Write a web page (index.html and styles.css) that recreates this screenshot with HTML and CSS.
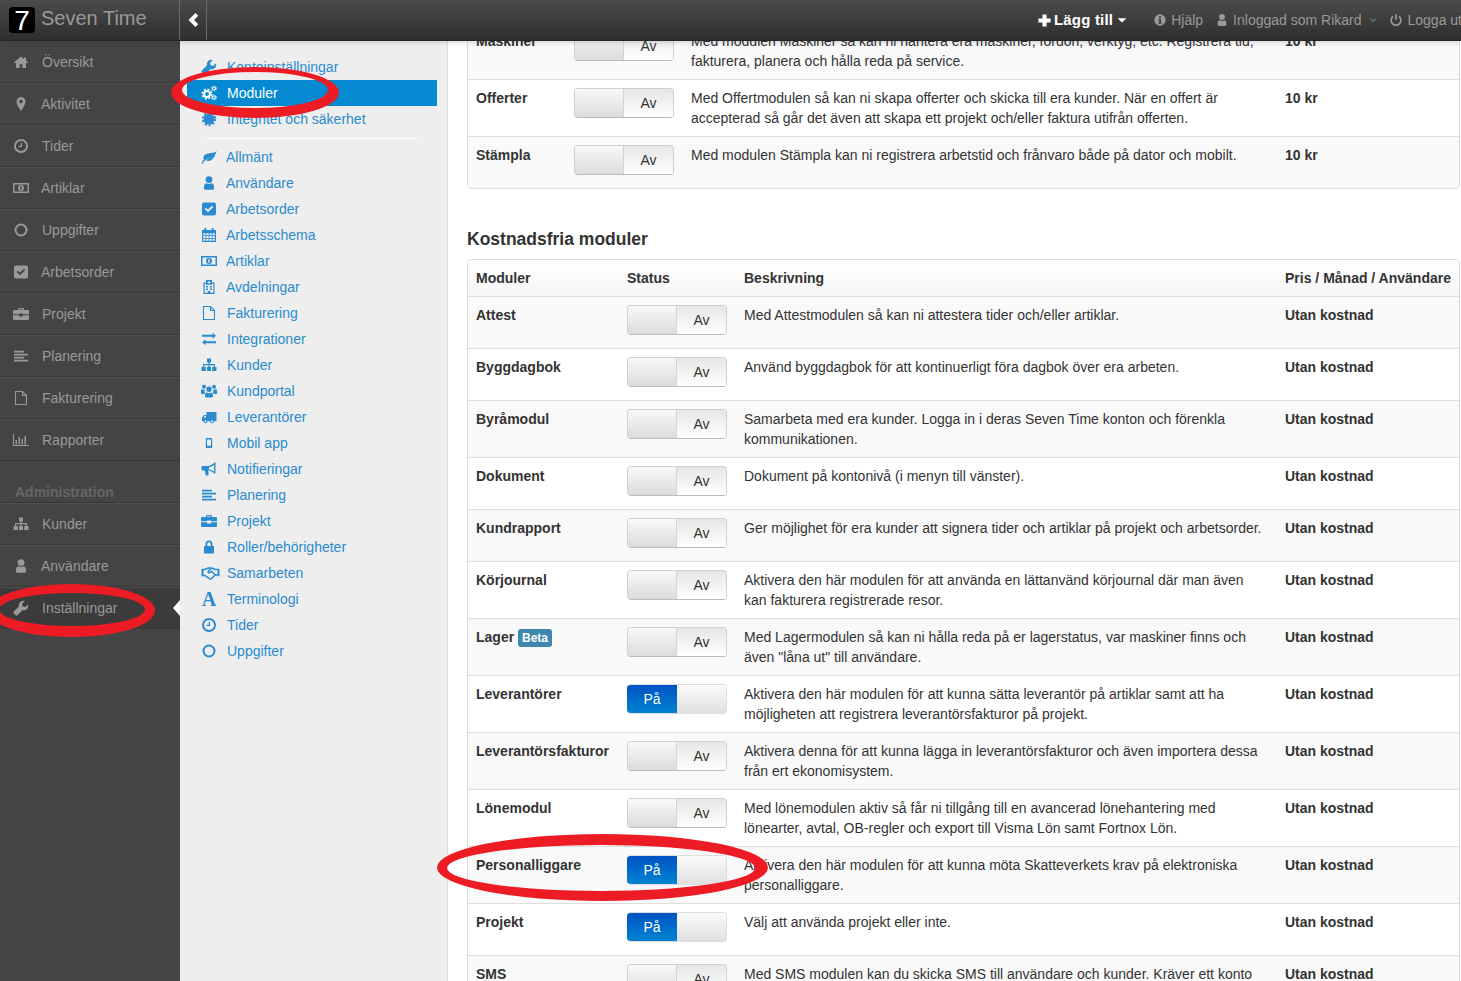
FILE: index.html
```html
<!DOCTYPE html>
<html lang="sv">
<head>
<meta charset="utf-8">
<title>Seven Time</title>
<link rel="stylesheet" href="styles.css">
</head>
<body>
<svg class="defs" width="0" height="0" aria-hidden="true">
<symbol id="i-home" viewBox="0 0 16 16"><path d="M8 2.500 1 8.300l.8 1L3 8.400V14h3.600v-3.700h2.800V14H13V8.400l1.200.9.8-1-2-1.700V3.500h-2v1.400z"/></symbol>
<symbol id="i-marker" viewBox="0 0 16 16"><path fill-rule="evenodd" d="M8 1a4.500 4.500 0 0 0-4.500 4.500C3.500 9 8 15 8 15s4.500-6 4.500-9.500A4.500 4.500 0 0 0 8 1zm0 2.700a1.800 1.800 0 1 1 0 3.600 1.800 1.800 0 0 1 0-3.600z"/></symbol>
<symbol id="i-clock" viewBox="0 0 16 16"><path fill-rule="evenodd" d="M8 1a7 7 0 1 0 0 14A7 7 0 0 0 8 1zm0 1.900a5.100 5.100 0 1 1 0 10.200A5.100 5.100 0 0 1 8 2.900zM7.800 4.800H9v4.100H5.500V7.700h2.300z"/></symbol>
<symbol id="i-money" viewBox="0 0 16 16"><path fill-rule="evenodd" d="M0 3h16v10H0zM1.500 4.500v7h13v-7zM8 5a3 3 0 1 0 0 6 3 3 0 0 0 0-6zM7.300 6.300h1.400v3.400H7.300z"/></symbol>
<symbol id="i-circle" viewBox="0 0 16 16"><path fill-rule="evenodd" d="M8 1.500a6.500 6.500 0 1 0 0 13 6.500 6.500 0 0 0 0-13zm0 2a4.500 4.500 0 1 1 0 9 4.500 4.500 0 0 1 0-9z"/></symbol>
<symbol id="i-check" viewBox="0 0 16 16"><path fill-rule="evenodd" d="M3 1.500h10a2 2 0 0 1 2 2v9a2 2 0 0 1-2 2H3a2 2 0 0 1-2-2v-9a2 2 0 0 1 2-2zM3.700 8 5 6.800l2 1.900 4-3.900L12.300 6 7 11.200z"/></symbol>
<symbol id="i-case" viewBox="0 0 16 16"><path fill-rule="evenodd" d="M6 2h4a1 1 0 0 1 1 1v1h4a1 1 0 0 1 1 1v3.300H10V7.500H6v.8H0V5a1 1 0 0 1 1-1h4V3a1 1 0 0 1 1-1zm.2 1.200V4h3.600v-.8zM0 9.300h6v1.200h4V9.300h6V13a1 1 0 0 1-1 1H1a1 1 0 0 1-1-1z"/></symbol>
<symbol id="i-align" viewBox="0 0 16 16"><path d="M1 2.700h10v1.900H1zM1 5.700h14v1.900H1zM1 8.700h10v1.900H1zM1 11.700h14v1.900H1z"/></symbol>
<symbol id="i-file" viewBox="0 0 16 16"><path class="line" d="M2.500 1.500h7l4 4v9h-11zM9.500 1.500v4h4"/></symbol>
<symbol id="i-chart" viewBox="0 0 16 16"><path d="M0 2h1v11h15v1H0zM2.500 8H4v4.500H2.500zM5.500 5H7v7.500H5.500zM8.500 7H10v5.500H8.500zM11.500 4H13v8.500h-1.500z"/></symbol>
<symbol id="i-sitemap" viewBox="0 0 16 16"><path d="M6 1.500h4v4H8.600V7H14v3h1.500v4h-4.300v-4h1.600V8.200H8.600V10H10v4H6v-4h1.400V8.200H3.200V10h1.600v4H.5v-4H2V7h5.400V5.500H6z"/></symbol>
<symbol id="i-user" viewBox="0 0 16 16"><path d="M8 1.200a3.400 3.400 0 1 1 0 6.800 3.400 3.400 0 0 1 0-6.800zM3 12c0-2.500 1-3.800 2.600-3.800.7.500 1.500.8 2.400.8s1.700-.3 2.400-.8C12 8.200 13 9.500 13 12v1.200c0 .9-.7 1.600-1.600 1.600H4.600c-.9 0-1.600-.7-1.600-1.600z"/></symbol>
<symbol id="i-wrench" viewBox="0 0 16 16"><path d="m15 4.300-2.900 2.700-2.400-.7-.7-2.400L11.700.9c-1.600-.5-3.400-.2-4.600 1-1.200 1.200-1.500 2.900-1 4.400L1 11.400a1.600 1.600 0 0 0 0 2.300l1.300 1.300a1.600 1.600 0 0 0 2.300 0l5.100-5.100c1.500.5 3.200.2 4.300-1 1.200-1.200 1.500-3 1-4.600z"/></symbol>
<symbol id="i-cogs" viewBox="0 0 16 16"><circle class="line w2" cx="6" cy="9" r="2.900"/><circle class="line dash" cx="6" cy="9" r="4.700"/><circle class="line w1" cx="13" cy="3.500" r="1.500"/><circle class="line w1" cx="13" cy="12.500" r="1.500"/><circle class="line dash2" cx="13" cy="3.500" r="2.500"/><circle class="line dash2" cx="13" cy="12.500" r="2.500"/></symbol>
<symbol id="i-cert" viewBox="0 0 16 16"><circle cx="8" cy="8" r="5.600"/><circle class="line burst" cx="8" cy="8" r="6.300"/></symbol>
<symbol id="i-leaf" viewBox="0 0 16 16"><path d="M15.500 2c-1 1.400-3 1.700-5.700 1.900C6 4.200 3 5.300 2.500 8c-.2 1 0 1.800.4 2.600C1.800 11.700 1 13 .5 14.400l1.100.5c.5-1.400 1.900-3.200 3.500-4.300 1.800-1.200 3.800-1.900 5.200-2.800-1.700 1.400-3.900 2-5.400 3.500 1.500 1 3.800 1 5.500-.2 2.900-2 4-5.700 5.100-8.600z"/></symbol>
<symbol id="i-cal" viewBox="0 0 16 16"><path fill-rule="evenodd" d="M1 3h2.200V1.300h2.200V3h5.200V1.300h2.200V3H15v12H1zM2.200 6.300v2h2.300v-2zm3.100 0v2h2.300v-2zm3.100 0v2h2.300v-2zm3.100 0v2h2.300v-2zM2.200 9v2h2.300V9zm3.100 0v2h2.300V9zm3.100 0v2h2.300V9zm3.100 0v2h2.300V9zM2.200 11.700v2h2.300v-2zm3.100 0v2h2.300v-2zm3.100 0v2h2.300v-2zm3.100 0v2h2.300v-2z"/></symbol>
<symbol id="i-build" viewBox="0 0 16 16"><path fill-rule="evenodd" d="M2.500 3.500H5V1h6v2.500h2.500V15h-11zM3.700 4.700v9.100h3V12h2.600v1.800h3V4.700H11v1h-6v-1zM5 7h2v1.500H5zM9 7h2v1.500H9zM5 9.500h2V11H5zM9 9.500h2V11H9zM7.400 2v1h-1v.8h1v1h1.200v-1h1V3h-1V2z"/></symbol>
<symbol id="i-exch" viewBox="0 0 16 16"><path d="M1 3.800h10.500V1.800L15 4.800l-3.500 3V5.800H1zM15 10.200H4.500v-2L1 11.200l3.500 3v-2H15z"/></symbol>
<symbol id="i-users" viewBox="0 0 16 16"><path d="M8 3.500a2.700 2.700 0 1 1 0 5.400 2.700 2.700 0 0 1 0-5.400zM3 1.800a2 2 0 1 1 0 4 2 2 0 0 1 0-4zM13 1.800a2 2 0 1 1 0 4 2 2 0 0 1 0-4zM0 7.500c0-.8.700-1.300 1.500-1.300.5.300 1 .5 1.700.5h.5c-.2 1-.1 2 .6 3-.8.300-1.600.9-2 1.500H.8C.3 10.600 0 10.200 0 9.700zM16 7.500c0-.8-.7-1.300-1.500-1.300-.5.300-1 .5-1.700.5h-.5c.2 1 .1 2-.6 3 .8.300 1.600.9 2 1.500h1.500c.5-.1.800-.5.800-1zM4 12.500c0-2 .9-3 2-3 .5.500 1.200.7 2 .7s1.500-.2 2-.7c1.100 0 2 1 2 3v.7c0 .9-.7 1.300-1.500 1.300h-5C4.700 14.500 4 14.100 4 13.200z"/></symbol>
<symbol id="i-truck" viewBox="0 0 16 16"><path fill-rule="evenodd" d="M5.500 3H15.500v9.200H13a2 2 0 0 1-4 0H6.500a2 2 0 0 1-4 0H1V8.400L3 6h2.500zM2.500 8.400H5V6.900H3.700zM4.500 11.200a1 1 0 1 0 0 2 1 1 0 0 0 0-2zm6.500 0a1 1 0 1 0 0 2 1 1 0 0 0 0-2z"/></symbol>
<symbol id="i-mobile" viewBox="0 0 16 16"><path fill-rule="evenodd" d="M5.800 3h4.400c.6 0 1 .4 1 1v8c0 .6-.4 1-1 1H5.800c-.6 0-1-.4-1-1V4c0-.6.4-1 1-1zM6 4.500v6.200h4V4.500z"/></symbol>
<symbol id="i-horn" viewBox="0 0 16 16"><path fill-rule="evenodd" d="M14.500 1.500v11h-1l-.6-.5c-2-1.500-4-2.300-6-2.500l.9 3.500-.8 1.500H4.900L3.700 9.400H1.200C.8 9.400.5 9 .5 8.600V5.700c0-.4.3-.7.7-.7h5.300c2.200 0 4.600-1 6.400-2.900l.6-.6zm-1.300 2.600c-1.700 1.300-3.500 2-5.300 2.200v2.100c1.800.2 3.600 1 5.300 2.200z"/></symbol>
<symbol id="i-lock" viewBox="0 0 16 16"><path fill-rule="evenodd" d="M4.500 7V5a3.500 3.500 0 0 1 7 0v2h1c.3 0 .5.2.5.5v6.500c0 .3-.2.500-.5.500h-9c-.3 0-.5-.2-.5-.5V7.500c0-.3.2-.5.500-.5zM6.300 7h3.400V5a1.700 1.700 0 0 0-3.400 0z"/></symbol>
<symbol id="i-shake" viewBox="0 0 18 16"><path class="line w15" d="M1 4.500h2.800L6.500 3H10l4 1.500h3M1 10.500h2.500l4.300 3.200c.8.500 1.700.3 2.200-.3l3.700-3.400L17 10M10 3 6.700 6.300c-.6.700.5 1.800 1.500 1.200L10 6.300l3.900 3.700"/><path d="M0 4h2v7.300H0zM16 4h2v7.300h-2z"/></symbol>
<symbol id="i-info" viewBox="0 0 16 16"><path fill-rule="evenodd" d="M8 1.500a6.500 6.500 0 1 0 0 13 6.500 6.500 0 0 0 0-13zM6.900 3.500h2.200v2H6.900zM6.200 6.500h2.900v4.300h.8v1.500H6.200v-1.500H7V8H6.200z"/></symbol>
<symbol id="i-power" viewBox="0 0 16 16"><path class="line w2" d="M4.700 3.800a5.600 5.600 0 1 0 6.600 0M8 1.500v6.300"/></symbol>
<symbol id="i-plus" viewBox="0 0 16 16"><path d="M5.800 1.500h4.400v4.300h4.300v4.400h-4.300v4.300H5.800v-4.300H1.500V5.800h4.300z"/></symbol>
<symbol id="i-caret" viewBox="0 0 16 16"><path d="M1 5h14L8 12z"/></symbol>
<symbol id="i-chev" viewBox="0 0 16 16"><path d="M10.800 0 14 3.200 9.200 8 14 12.800 10.800 16l-8-8z"/></symbol>
<symbol id="i-angle" viewBox="0 0 16 16"><path class="line w15" d="m3 5.500 5 5 5-5"/></symbol>
</svg>

<div class="app">
  <header class="topbar">
    <div class="brand">
      <span class="logo">7</span>
      <span class="brand-name">Seven Time</span>
    </div>
    <button class="collapse" type="button"><svg class="ico chev"><use href="#i-chev"/></svg></button>
    <nav class="topnav">
      <a class="add"><svg class="ico plus"><use href="#i-plus"/></svg>Lägg till<svg class="ico caret"><use href="#i-caret"/></svg></a>
      <a class="help"><svg class="ico small"><use href="#i-info"/></svg>Hjälp</a>
      <a class="who"><svg class="ico small"><use href="#i-user"/></svg>Inloggad som Rikard<svg class="ico angle"><use href="#i-angle"/></svg></a>
      <a class="out"><svg class="ico small"><use href="#i-power"/></svg>Logga ut</a>
    </nav>
  </header>

  <div class="body">
    <aside class="side">
      <a class="si"><svg class="ico"><use href="#i-home"/></svg>Översikt</a>
      <a class="si tight"><svg class="ico"><use href="#i-marker"/></svg>Aktivitet</a>
      <a class="si"><svg class="ico"><use href="#i-clock"/></svg>Tider</a>
      <a class="si tight"><svg class="ico"><use href="#i-money"/></svg>Artiklar</a>
      <a class="si"><svg class="ico"><use href="#i-circle"/></svg>Uppgifter</a>
      <a class="si tight"><svg class="ico"><use href="#i-check"/></svg>Arbetsorder</a>
      <a class="si"><svg class="ico"><use href="#i-case"/></svg>Projekt</a>
      <a class="si"><svg class="ico"><use href="#i-align"/></svg>Planering</a>
      <a class="si"><svg class="ico"><use href="#i-file"/></svg>Fakturering</a>
      <a class="si"><svg class="ico"><use href="#i-chart"/></svg>Rapporter</a>
      <div class="side-label">Administration</div>
      <a class="si"><svg class="ico"><use href="#i-sitemap"/></svg>Kunder</a>
      <a class="si tight"><svg class="ico"><use href="#i-user"/></svg>Användare</a>
      <a class="si active"><svg class="ico"><use href="#i-wrench"/></svg>Inställningar</a>
    </aside>

    <nav class="sub">
      <ul class="sub-list">
        <li><a><svg class="ico"><use href="#i-wrench"/></svg>Kontoinställningar</a></li>
        <li class="on"><a><svg class="ico"><use href="#i-cogs"/></svg>Moduler</a></li>
        <li><a><svg class="ico"><use href="#i-cert"/></svg>Integritet och säkerhet</a></li>
      </ul>
      <hr class="sub-rule">
      <ul class="sub-list">
        <li class="tight"><a><svg class="ico"><use href="#i-leaf"/></svg>Allmänt</a></li>
        <li class="tight"><a><svg class="ico"><use href="#i-user"/></svg>Användare</a></li>
        <li class="tight"><a><svg class="ico"><use href="#i-check"/></svg>Arbetsorder</a></li>
        <li class="tight"><a><svg class="ico"><use href="#i-cal"/></svg>Arbetsschema</a></li>
        <li class="tight"><a><svg class="ico"><use href="#i-money"/></svg>Artiklar</a></li>
        <li class="tight"><a><svg class="ico"><use href="#i-build"/></svg>Avdelningar</a></li>
        <li><a><svg class="ico"><use href="#i-file"/></svg>Fakturering</a></li>
        <li><a><svg class="ico"><use href="#i-exch"/></svg>Integrationer</a></li>
        <li><a><svg class="ico"><use href="#i-sitemap"/></svg>Kunder</a></li>
        <li><a><svg class="ico"><use href="#i-users"/></svg>Kundportal</a></li>
        <li><a><svg class="ico"><use href="#i-truck"/></svg>Leverantörer</a></li>
        <li><a><svg class="ico"><use href="#i-mobile"/></svg>Mobil app</a></li>
        <li><a><svg class="ico"><use href="#i-horn"/></svg>Notifieringar</a></li>
        <li><a><svg class="ico"><use href="#i-align"/></svg>Planering</a></li>
        <li><a><svg class="ico"><use href="#i-case"/></svg>Projekt</a></li>
        <li><a><svg class="ico"><use href="#i-lock"/></svg>Roller/behörigheter</a></li>
        <li><a><svg class="ico wide"><use href="#i-shake"/></svg>Samarbeten</a></li>
        <li><a><span class="ico serif-a">A</span>Terminologi</a></li>
        <li><a><svg class="ico"><use href="#i-clock"/></svg>Tider</a></li>
        <li><a><svg class="ico"><use href="#i-circle"/></svg>Uppgifter</a></li>
      </ul>
    </nav>

    <main class="main">
      <div class="content">
        <div class="tbl-box">
          <table class="tbl paid">
            <thead><tr><th class="c1">Moduler</th><th class="c2">Status</th><th>Beskrivning</th><th class="c4">Pris / Månad / Användare</th></tr></thead>
            <tbody>
              <tr><td class="n">Maskiner</td><td><span class="sw"><i></i><b>Av</b></span></td><td>Med modulen Maskiner så kan ni hantera era maskiner, fordon, verktyg, etc. Registrera tid, fakturera, planera och hålla reda på service.</td><td class="n">10 kr</td></tr>
              <tr><td class="n">Offerter</td><td><span class="sw"><i></i><b>Av</b></span></td><td>Med Offertmodulen så kan ni skapa offerter och skicka till era kunder. När en offert är accepterad så går det även att skapa ett projekt och/eller faktura utifrån offerten.</td><td class="n">10 kr</td></tr>
              <tr><td class="n">Stämpla</td><td><span class="sw"><i></i><b>Av</b></span></td><td>Med modulen Stämpla kan ni registrera arbetstid och frånvaro både på dator och mobilt.</td><td class="n">10 kr</td></tr>
            </tbody>
          </table>
        </div>

        <h3 class="section">Kostnadsfria moduler</h3>

        <div class="tbl-box">
          <table class="tbl free">
            <thead><tr><th class="c1">Moduler</th><th class="c2">Status</th><th>Beskrivning</th><th class="c4">Pris / Månad / Användare</th></tr></thead>
            <tbody>
              <tr><td class="n">Attest</td><td><span class="sw"><i></i><b>Av</b></span></td><td>Med Attestmodulen så kan ni attestera tider och/eller artiklar.</td><td class="n">Utan kostnad</td></tr>
              <tr><td class="n">Byggdagbok</td><td><span class="sw"><i></i><b>Av</b></span></td><td>Använd byggdagbok för att kontinuerligt föra dagbok över era arbeten.</td><td class="n">Utan kostnad</td></tr>
              <tr><td class="n">Byråmodul</td><td><span class="sw"><i></i><b>Av</b></span></td><td>Samarbeta med era kunder. Logga in i deras Seven Time konton och förenkla kommunikationen.</td><td class="n">Utan kostnad</td></tr>
              <tr><td class="n">Dokument</td><td><span class="sw"><i></i><b>Av</b></span></td><td>Dokument på kontonivå (i menyn till vänster).</td><td class="n">Utan kostnad</td></tr>
              <tr><td class="n">Kundrapport</td><td><span class="sw"><i></i><b>Av</b></span></td><td>Ger möjlighet för era kunder att signera tider och artiklar på projekt och arbetsorder.</td><td class="n">Utan kostnad</td></tr>
              <tr><td class="n">Körjournal</td><td><span class="sw"><i></i><b>Av</b></span></td><td>Aktivera den här modulen för att använda en lättanvänd körjournal där man även kan fakturera registrerade resor.</td><td class="n">Utan kostnad</td></tr>
              <tr><td class="n">Lager <span class="beta">Beta</span></td><td><span class="sw"><i></i><b>Av</b></span></td><td>Med Lagermodulen så kan ni hålla reda på er lagerstatus, var maskiner finns och även "låna ut" till användare.</td><td class="n">Utan kostnad</td></tr>
              <tr><td class="n">Leverantörer</td><td><span class="sw on"><b>På</b><i></i></span></td><td>Aktivera den här modulen för att kunna sätta leverantör på artiklar samt att ha möjligheten att registrera leverantörsfakturor på projekt.</td><td class="n">Utan kostnad</td></tr>
              <tr><td class="n">Leverantörsfakturor</td><td><span class="sw"><i></i><b>Av</b></span></td><td>Aktivera denna för att kunna lägga in leverantörsfakturor och även importera dessa från ert ekonomisystem.</td><td class="n">Utan kostnad</td></tr>
              <tr><td class="n">Lönemodul</td><td><span class="sw"><i></i><b>Av</b></span></td><td>Med lönemodulen aktiv så får ni tillgång till en avancerad lönehantering med lönearter, avtal, OB-regler och export till Visma Lön samt Fortnox Lön.</td><td class="n">Utan kostnad</td></tr>
              <tr><td class="n">Personalliggare</td><td><span class="sw on"><b>På</b><i></i></span></td><td>Aktivera den här modulen för att kunna möta Skatteverkets krav på elektroniska personalliggare.</td><td class="n">Utan kostnad</td></tr>
              <tr><td class="n">Projekt</td><td><span class="sw on"><b>På</b><i></i></span></td><td>Välj att använda projekt eller inte.</td><td class="n">Utan kostnad</td></tr>
              <tr><td class="n">SMS</td><td><span class="sw"><i></i><b>Av</b></span></td><td>Med SMS modulen kan du skicka SMS till användare och kunder. Kräver ett konto</td><td class="n">Utan kostnad</td></tr>
            </tbody>
          </table>
        </div>
      </div>
    </main>
  </div>

  <svg class="marks" viewBox="0 0 1461 981" aria-hidden="true">
    <path class="mark" fill-rule="evenodd" d="M171 92.500a84 25.500 0 1 0 168 0a84 25.500 0 1 0-168 0zM182 90a73 18 0 1 1 146 0a73 18 0 1 1-146 0z"/>
    <path class="mark" fill-rule="evenodd" d="M-12 610.500a83.500 26.500 0 1 0 167 0a83.500 26.500 0 1 0-167 0zM-1 609.500a73 16.500 0 1 1 146 0a73 16.500 0 1 1-146 0z"/>
    <path class="mark" fill-rule="evenodd" d="M437 867.500a165.500 33.500 0 1 0 331 0a165.500 33.500 0 1 0-331 0zM447 868a154 23 0 1 1 308 0a154 23 0 1 1-308 0z"/>
  </svg>
</div>
</body>
</html>
```

FILE: styles.css
```css
* { box-sizing: border-box; }
html, body { margin: 0; height: 100%; overflow: hidden; }
body { font: 14px/20px "Liberation Sans", Arial, sans-serif; color: #333; background: #fff; }
.defs { position: absolute; }
a { text-decoration: none; color: inherit; }
ul { list-style: none; margin: 0; padding: 0; }

.line { fill: none; stroke: currentColor; stroke-width: 1.1; }
.w1 { stroke-width: 1.1; }
.w15 { stroke-width: 1.5; }
.w2 { stroke-width: 2; }
.dash { stroke-width: 1.8; stroke-dasharray: 1.9 1.79; }
.dash2 { stroke-width: 1; stroke-dasharray: 1.2 1.42; }
.burst { stroke-width: 1.8; stroke-dasharray: 2.2 1.76; }

.ico { width: 16px; height: 16px; fill: currentColor; flex: none; display: block; }

.app { position: relative; height: 100vh; display: flex; flex-direction: column; overflow: hidden; }

/* Top bar */
.topbar { flex: none; height: 41px; display: flex; align-items: stretch; position: relative; z-index: 2;
  background: linear-gradient(#4b4b4b, #2e2e2e); border-bottom: 1px solid #262626;
  box-shadow: 0 1px 5px rgba(0,0,0,.18); }
.brand { width: 179px; display: flex; align-items: center; padding-left: 9px; gap: 6px; }
.logo { width: 26px; height: 26px; border-radius: 4px; background: #000; color: #fff; font-size: 28px; line-height: 27px; text-align: center; }
.brand-name { font-size: 20px; color: #9a9a9a; line-height: 26px; position: relative; top: -2px; }
.collapse { width: 28px; padding: 0; background: none; border: 0; border-left: 1px solid #6a6a6a; border-right: 1px solid #6a6a6a; color: #fff; display: flex; align-items: center; justify-content: center; }
.chev { width: 14px; height: 14px; }
.topnav { margin-left: auto; margin-right: -1px; display: flex; align-items: center; color: #999; white-space: nowrap; }
.topnav a { display: flex; align-items: center; }
.small { width: 14px; height: 14px; margin-right: 4px; }
.out .small { margin-right: 5px; }
.add { color: #fff; font-weight: bold; font-size: 15px; letter-spacing: .2px; margin-right: 26px; }
.plus { width: 15px; height: 15px; margin-right: 2px; }
.caret { width: 10px; height: 10px; margin-left: 4px; }
.help { margin-right: 12px; }
.who { margin-right: 11px; }
.angle { width: 10px; height: 10px; margin-left: 6px; }

/* Body */
.body { flex: 1; min-height: 0; display: flex; }

/* Sidebar */
.side { flex: none; width: 180px; background: #444; color: #999; }
.si { position: relative; height: 42px; display: flex; align-items: center; padding-left: 13px; gap: 13px;
  border-top: 1px solid #4f4f4f; border-bottom: 1px solid #373737; }
.si.tight { gap: 12px; }
.si.active { background: #3b3b3b; }
.si.active::after { content: ""; position: absolute; right: 0; top: 12px; border: 8px solid transparent; border-right: 7px solid #fff; border-left: 0; }
.side-label { height: 42px; padding: 21px 0 0 15px; color: #666; font-weight: bold; border-bottom: 1px solid #373737; }

/* Sub navigation */
.sub { flex: none; width: 268px; background: #eee; border-right: 1px solid #ddd; padding: 13px 10px 0 7px; color: #2a8bcf; }
.sub-list a { height: 26px; display: flex; align-items: center; padding-left: 14px; gap: 10px; }
.sub-list .tight a { gap: 9px; }
.sub-list .on a { background: #0589d0; color: #fff; }
.sub-rule { border: 0; border-top: 1px solid #fff; margin: 6px 20px 5px; }
.serif-a { font: bold 20px/16px "Liberation Serif", serif; text-align: center; }
.wide { width: 19px; margin-right: -3px; }

/* Main */
.main { flex: 1; min-width: 0; overflow: hidden; padding: 0 1px 0 19px; }
.content { margin-top: -56px; }
.tbl-box { border: 1px solid #ddd; border-radius: 4px; overflow: hidden; }
.tbl { width: 100%; border-collapse: separate; border-spacing: 0; table-layout: fixed; }
.tbl th, .tbl td { padding: 8px; text-align: left; vertical-align: top; }
.tbl th { background: linear-gradient(#fff, #f5f5f5); font-weight: bold; white-space: nowrap; }
.tbl td { border-top: 1px solid #ddd; }
.tbl tbody tr:nth-child(odd) td { background: #f9f9f9; }
.n { font-weight: bold; }
.paid .c1 { width: 98px; }
.free .c1 { width: 151px; }
.c2 { width: 117px; }
.c4 { width: 182px; }

.section { margin: 40px 0 10px; font-size: 17.5px; line-height: 20px; font-weight: bold; }

.sw { display: flex; width: 100px; height: 30px; margin-bottom: 5px; border: 1px solid #d0d0d0; border-bottom-color: #bbb; border-radius: 4px; overflow: hidden; font-weight: normal; }
.sw i { flex: 1; background: linear-gradient(#f8f8f8, #dcdcdc); }
.sw b { width: 50px; flex: none; font-weight: normal; text-align: center; line-height: 28px; background: linear-gradient(#e6e6e6, #fff); border-left: 1px solid #d4d4d4; }
.sw.on { border-color: #ddd; border-left: 0; }
.sw.on b { color: #fff; background: linear-gradient(#0052c4, #0084d0); border: 0; }
.sw.on i { background: linear-gradient(#fafafa, #e0e0e0); }

.beta { display: inline-block; margin-left: 0; padding: 0 4px; height: 18px; line-height: 18px; border-radius: 3px; background: #3f87ad; color: #fff; font-size: 12px; font-weight: bold; }

/* Red hand-drawn annotations */
.marks { position: absolute; left: 0; top: 0; width: 1461px; height: 981px; z-index: 3; pointer-events: none; }
.mark { fill: #ed1c24; }
```
